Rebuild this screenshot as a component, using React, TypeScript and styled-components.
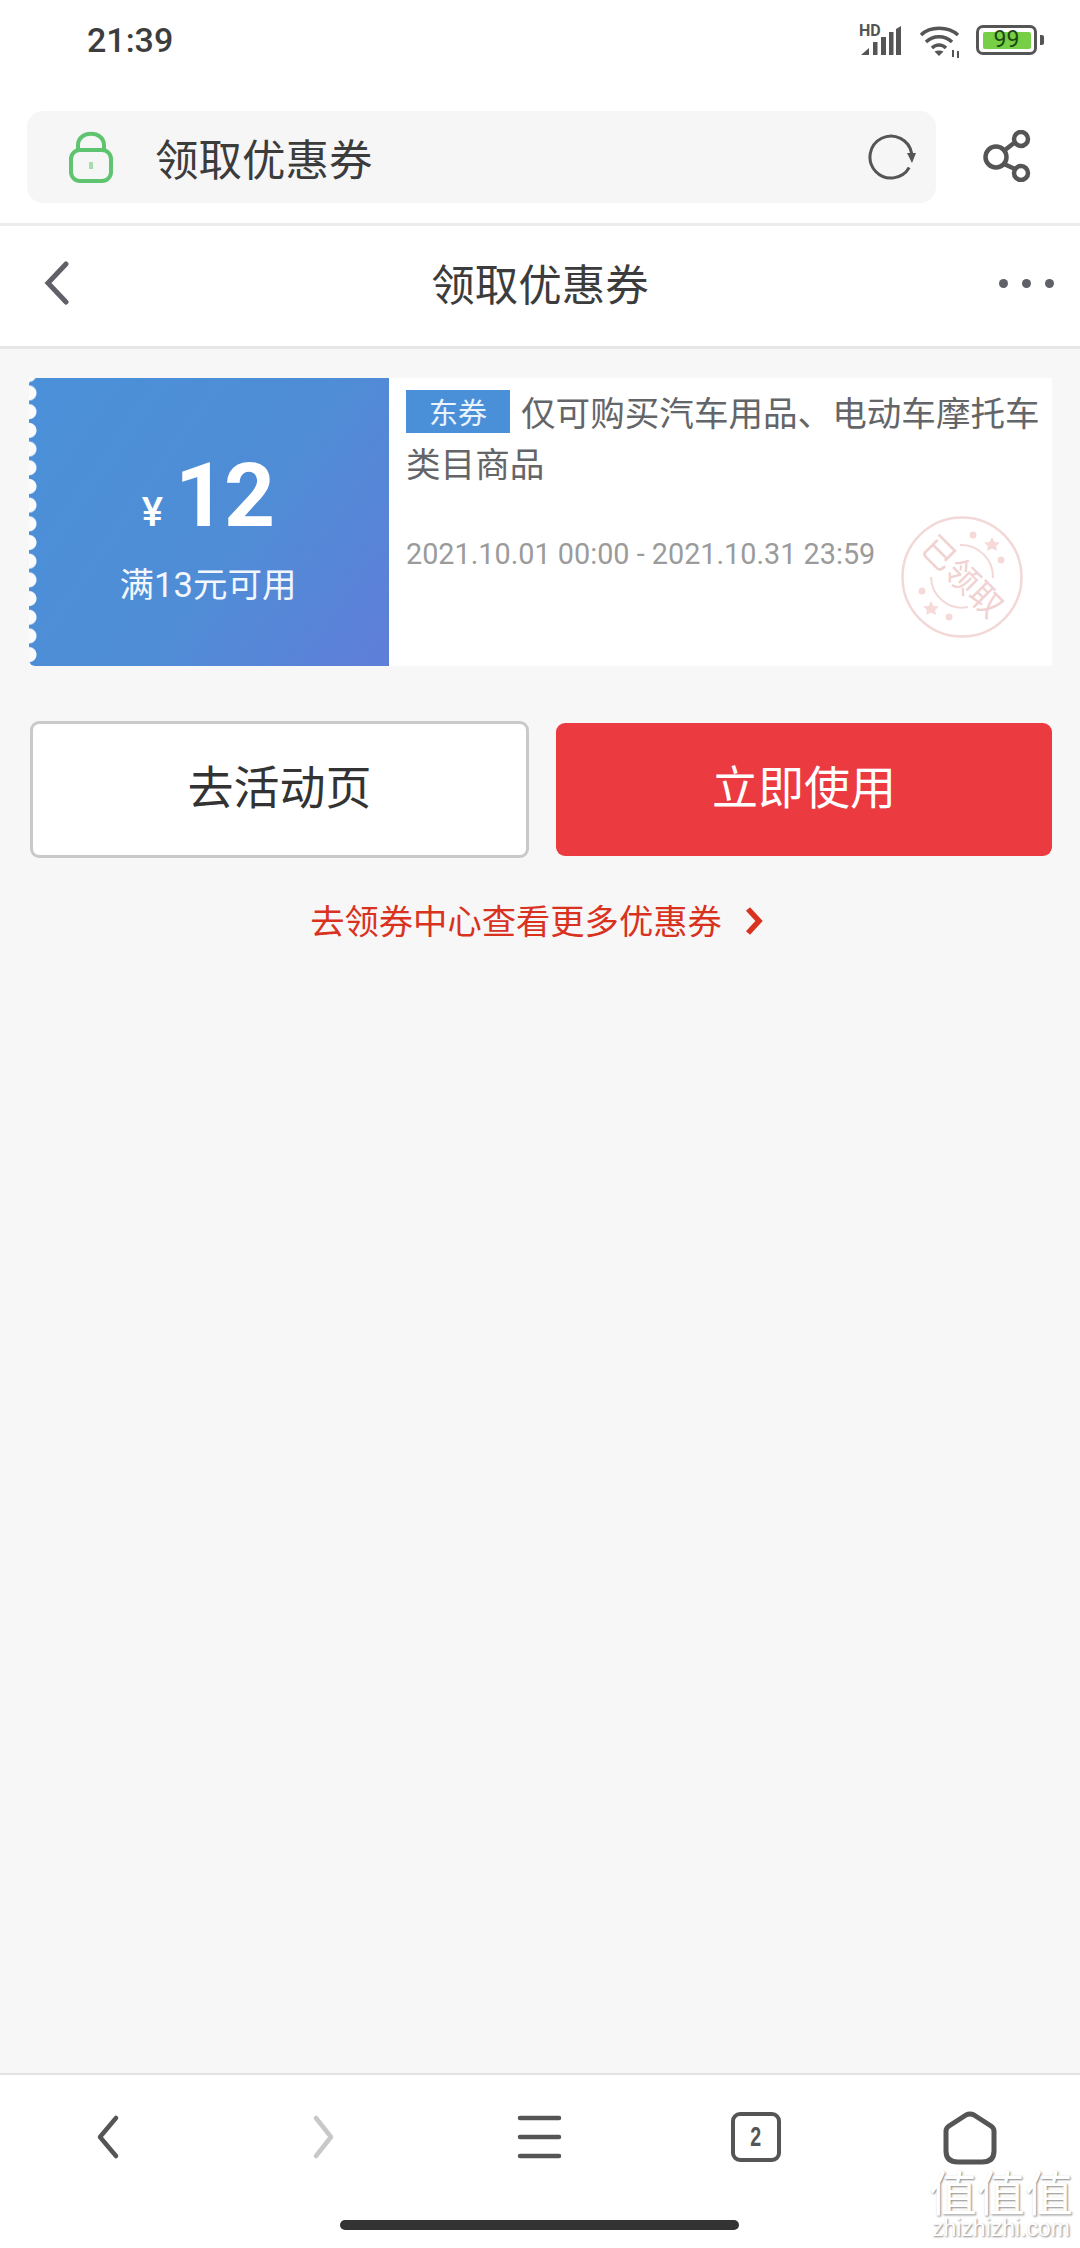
import React from "react";
import styled, { createGlobalStyle } from "styled-components";

const GlobalStyle = createGlobalStyle`
  html, body {
    margin: 0;
    padding: 0;
    background: #f7f7f7;
  }
  * {
    box-sizing: border-box;
  }
`;

const cjk = `"Noto Sans CJK SC", "Noto Sans", sans-serif`;
const latin = `Roboto, "Noto Sans CJK SC", sans-serif`;

const App: React.FC = () => {
  return (
    <Page>
      <GlobalStyle />
      <StatusBar>
        <Clock>21:39</Clock>
        <StatusIcons>
          <SignalIcon />
          <WifiIcon />
          <Battery>
            <BatteryBody>
              <BatteryFill>99</BatteryFill>
            </BatteryBody>
            <BatteryNub />
          </Battery>
        </StatusIcons>
      </StatusBar>

      <AddressRow>
        <AddressBar>
          <LockIcon />
          <AddressText>领取优惠券</AddressText>
          <RefreshIcon />
        </AddressBar>
        <ShareIcon />
      </AddressRow>

      <Header>
        <BackIcon />
        <HeaderTitle>领取优惠券</HeaderTitle>
        <Dots>
          <span />
          <span />
          <span />
        </Dots>
      </Header>

      <Main>
        <Ticket>
          <TicketLeft>
            <Amount>
              <Currency>¥</Currency>
              <Value>12</Value>
            </Amount>
            <Condition>满13元可用</Condition>
          </TicketLeft>
          <TicketRight>
            <Description>
              <Tag>东券</Tag>仅可购买汽车用品、电动车摩托车类目商品
            </Description>
            <DateRange>2021.10.01 00:00 - 2021.10.31 23:59</DateRange>
            <Stamp />
          </TicketRight>
        </Ticket>

        <Actions>
          <ActionButton>去活动页</ActionButton>
          <ActionButton $primary>立即使用</ActionButton>
        </Actions>

        <MoreLink>
          去领券中心查看更多优惠券
          <MoreChevron />
        </MoreLink>
      </Main>

      <BottomBar>
        <NavRow>
          <NavChevron d="M116 2118 L100 2137 L116 2156" color="#555" />
          <NavChevron d="M316 2118 L331 2137 L316 2156" color="#c8c8c8" />
          <MenuIcon />
          <TabCount>
            <TabDigit>2</TabDigit>
          </TabCount>
          <HomeIcon />
        </NavRow>
        <HomeIndicator />
        <Watermark>
          <WatermarkMark>值值值</WatermarkMark>
          <WatermarkSite>zhizhizhi.com</WatermarkSite>
        </Watermark>
      </BottomBar>
    </Page>
  );
};

const SignalIcon = () => (
  <SignalSvg width="44" height="38" viewBox="0 -6 44 38">
    <text x="0" y="12" fontFamily="Roboto, sans-serif" fontWeight="700" fontSize="16" fill="#555">
      HD
    </text>
    <path d="M2 31 L10 24 V31 Z" fill="#555" />
    <rect x="14" y="18" width="4.500" height="13" fill="#555" />
    <rect x="22" y="13" width="5" height="18" fill="#555" />
    <rect x="30" y="8" width="4.500" height="23" fill="#555" />
    <path d="M37 5 L42 2 V31 H37 Z" fill="#555" />
  </SignalSvg>
);

const WifiIcon = () => (
  <WifiSvg width="43" height="36" viewBox="0 0 43 36" fill="none" stroke="#555" strokeWidth="3.500">
    <path d="M3 11 C12 2 30 2 40 11" />
    <path d="M8 18 C15 11 27 11 34 18" />
    <path d="M14 24 C18 20 24 20 28 24" />
    <path d="M21 32 L16.500 27.500 C19 26 23 26 25.500 27.500 Z" fill="#555" stroke="none" />
    <path d="M35 26 V33 M40 34 V27" strokeWidth="2" />
  </WifiSvg>
);

const LockIcon = () => (
  <LockSvg width="44" height="52" viewBox="0 0 44 52" fill="none" stroke="#5fc46f" strokeWidth="4">
    <path d="M9 20 V14 C9 -1 35 -1 35 14 V20" />
    <rect x="2" y="19" width="40" height="31" rx="9" />
    <path d="M22 31 V38" stroke="#a6dcae" />
  </LockSvg>
);

const RefreshIcon = () => (
  <RefreshSvg width="50" height="46" viewBox="0 0 50 46" fill="none" stroke="#555" strokeWidth="3">
    <path d="M43.200 33.500 A21 21 0 1 1 45.700 19.500" />
    <path d="M41 19 L50 19 L46 29 Z" fill="#555" stroke="none" />
  </RefreshSvg>
);

const ShareIcon = () => (
  <ShareSvg width="48" height="52" viewBox="0 0 48 52" fill="none" stroke="#555" strokeWidth="4.500">
    <circle cx="13" cy="27" r="10.500" />
    <circle cx="38" cy="9" r="7" />
    <circle cx="38" cy="43" r="7" />
    <path d="M22 20 L31 13 M21 34 L32 39" />
  </ShareSvg>
);

const BackIcon = () => (
  <BackSvg width="26" height="44" viewBox="0 0 26 44" fill="none" stroke="#5f6068" strokeWidth="5" strokeLinecap="round">
    <path d="M22 3 L4 22 L22 41" />
  </BackSvg>
);

const MoreChevron = () => (
  <MoreSvg width="20" height="30" viewBox="0 0 20 30" fill="none" stroke="#d9321e" strokeWidth="5.500">
    <path d="M4 3 L15 15 L4 27" />
  </MoreSvg>
);

const Stamp = () => (
  <StampSvg width="124" height="124" viewBox="0 0 124 124" fill="none" stroke="#f3d8d8">
    <circle cx="62" cy="62" r="59.500" strokeWidth="2.500" />
    <path d="M60 30 A32 32 0 0 1 93 63" strokeWidth="2" />
    <path d="M31 62 A31 31 0 0 0 68 92" strokeWidth="2" />
    <StampText x="62" y="73" transform="rotate(45 62 62)">
      已领取
    </StampText>
    <g fill="#f6dada" stroke="none">
      <circle cx="73" cy="20" r="3.500" />
      <circle cx="101" cy="45" r="3.500" />
      <path d="M92 22 L94.500 27 L100 27.500 L96 31 L97 36 L92 33.500 L87 36 L88 31 L84 27.500 L89.500 27 Z" />
      <circle cx="22" cy="76" r="3.500" />
      <circle cx="49" cy="102" r="3.500" />
      <path d="M31 86 L33.500 91 L39 91.500 L35 95 L36 100 L31 97.500 L26 100 L27 95 L23 91.500 L28.500 91 Z" />
    </g>
  </StampSvg>
);

const NavChevron: React.FC<{ d: string; color: string }> = ({ d, color }) => (
  <NavSvg viewBox="0 0 1080 2248" fill="none" stroke={color} strokeWidth="4.500" strokeLinecap="round" strokeLinejoin="round">
    <path d={d} />
  </NavSvg>
);

const MenuIcon = () => (
  <NavSvg viewBox="0 0 1080 2248" fill="none" stroke="#555" strokeWidth="4.500" strokeLinecap="round">
    <path d="M520 2118 H559 M520 2137 H559 M520 2156 H559" />
  </NavSvg>
);

const HomeIcon = () => (
  <NavSvg viewBox="0 0 1080 2248" fill="none" stroke="#555" strokeWidth="5" strokeLinejoin="round">
    <path d="M946 2131 Q946 2128 949 2126 L966 2115 Q970 2113 974 2115 L991 2126 Q994 2128 994 2131 V2151 Q994 2162 982 2162 H958 Q946 2162 946 2151 Z" />
  </NavSvg>
);

const Page = styled.div`
  width: 1080px;
  height: 2248px;
  display: flex;
  flex-direction: column;
  background: #f7f7f7;
  overflow: hidden;
  font-family: ${cjk};
`;

const StatusBar = styled.div`
  height: 80px;
  padding: 0 36px 0 87px;
  display: flex;
  align-items: center;
  justify-content: space-between;
  background: #fff;
`;

const Clock = styled.div`
  font-family: ${latin};
  font-weight: 500;
  font-size: 34px;
  color: #3d3d3d;
`;

const StatusIcons = styled.div`
  display: flex;
  align-items: center;
  gap: 15px;
`;

const SignalSvg = styled.svg`
  margin-bottom: 6px;
`;

const WifiSvg = styled.svg`
  margin-top: 4px;
`;

const Battery = styled.div`
  display: flex;
  align-items: center;
  gap: 3px;
`;

const BatteryBody = styled.div`
  width: 61px;
  height: 30px;
  padding: 3.500px;
  border: 3.500px solid #555;
  border-radius: 7px;
`;

const BatteryFill = styled.div`
  height: 100%;
  background: #77cf45;
  border-radius: 2px;
  color: #1b4a12;
  font-family: ${latin};
  font-size: 23px;
  line-height: 16px;
  text-align: center;
`;

const BatteryNub = styled.div`
  width: 4px;
  height: 10px;
  background: #555;
  border-radius: 0 2px 2px 0;
`;

const AddressRow = styled.div`
  height: 146px;
  padding: 31px 0 20px 27px;
  display: flex;
  background: #fff;
  border-bottom: 3px solid #ececec;
`;

const AddressBar = styled.div`
  width: 909px;
  height: 92px;
  padding: 0 14px 0 42px;
  display: flex;
  align-items: center;
  background: #f6f6f6;
  border-radius: 16px;
`;

const LockSvg = styled.svg`
  flex-shrink: 0;
`;

const AddressText = styled.div`
  margin-left: 42px;
  flex: 1;
  font-size: 43.500px;
  color: #3c3c3c;
`;

const RefreshSvg = styled.svg`
  margin-right: 6px;
`;

const ShareSvg = styled.svg`
  margin: 19px 0 0 47px;
`;

const Header = styled.div`
  position: relative;
  height: 123px;
  padding: 0 26px 6px 44px;
  display: flex;
  align-items: center;
  justify-content: space-between;
  background: #fff;
  border-bottom: 3px solid #e6e6e6;
`;

const BackSvg = styled.svg`
  flex-shrink: 0;
`;

const HeaderTitle = styled.div`
  margin-left: 11px;
  padding-bottom: 2px;
  font-size: 43.500px;
  color: #3c3c3c;
`;

const Dots = styled.div`
  display: flex;
  gap: 14px;

  span {
    width: 9px;
    height: 9px;
    border-radius: 50%;
    background: #5f6068;
  }
`;

const Main = styled.div`
  flex: 1;
  padding: 29px 28px 0 30px;
`;

const Ticket = styled.div`
  height: 288px;
  margin-left: -1px;
  display: flex;
  background: #fff;
`;

const TicketLeft = styled.div`
  position: relative;
  width: 360px;
  display: flex;
  flex-direction: column;
  align-items: center;
  background: linear-gradient(125deg, #4a90d8 0%, #4f8dd6 55%, #5f7ed9 100%);
  border-radius: 6px 0 0 6px;

  &::before {
    content: "";
    position: absolute;
    left: 0;
    top: 0;
    bottom: 0;
    width: 8px;
    background: radial-gradient(circle at 0 50%, #fbfbfb 7px, transparent 8px) 0 5.650px / 100% 18.700px repeat-y;
  }
`;

const Amount = styled.div`
  margin-top: 73px;
  margin-left: -3px;
  height: 90px;
  display: flex;
  align-items: baseline;
  color: #fff;
  font-family: ${latin};
`;

const Currency = styled.span`
  font-size: 40px;
  font-weight: 500;
  margin-right: 12px;
`;

const Value = styled.span`
  font-size: 89px;
  line-height: 90px;
  font-weight: 700;
  letter-spacing: -2px;
`;

const Condition = styled.div`
  margin-top: 19px;
  margin-left: -2px;
  color: #f2f6fd;
  font-family: ${latin};
  font-size: 34.500px;
  line-height: 50px;
`;

const TicketRight = styled.div`
  position: relative;
  flex: 1;
  padding: 8px 10px 0 17px;
`;

const Description = styled.div`
  font-size: 34.600px;
  line-height: 51px;
  color: #646568;
`;

const Tag = styled.span`
  display: inline-block;
  width: 104px;
  height: 43px;
  margin-right: 11px;
  background: #4a90d8;
  color: #eaf3fc;
  font-size: 29px;
  line-height: 43px;
  text-align: center;
  vertical-align: 2px;
`;

const DateRange = styled.div`
  margin-top: 41px;
  font-family: ${latin};
  font-size: 28.800px;
  line-height: 50px;
  color: #9b9b9b;
`;

const StampSvg = styled.svg`
  position: absolute;
  left: 511px;
  top: 137px;
`;

const StampText = styled.text`
  font-family: ${cjk};
  font-size: 33px;
  fill: #f1d2d2;
  stroke: none;
  text-anchor: middle;
`;

const Actions = styled.div`
  margin-top: 55px;
  display: flex;
  align-items: center;
  gap: 27px;
`;

const ActionButton = styled.div<{ $primary?: boolean }>`
  width: ${(props) => (props.$primary ? "496px" : "499px")};
  height: ${(props) => (props.$primary ? "133px" : "137px")};
  padding-bottom: 12px;
  display: flex;
  align-items: center;
  justify-content: center;
  border-radius: 9px;
  font-size: 46px;
  background: ${(props) => (props.$primary ? "#ec3a41" : "#fff")};
  color: ${(props) => (props.$primary ? "#fff" : "#333")};
  border: ${(props) => (props.$primary ? "none" : "3px solid #c9c9c9")};
`;

const MoreLink = styled.div`
  margin-top: 36px;
  display: flex;
  align-items: center;
  justify-content: center;
  padding-right: 8px;
  font-size: 34.300px;
  line-height: 50px;
  color: #d9321e;
`;

const MoreSvg = styled.svg`
  margin-left: 22px;
  margin-top: 4px;
`;

const BottomBar = styled.div`
  position: relative;
  height: 175px;
  background: #fff;
  border-top: 2px solid #e2e2e2;
`;

const NavRow = styled.div`
  position: absolute;
  inset: 0;
`;

const NavSvg = styled.svg`
  position: absolute;
  left: 0;
  top: -2075px;
  width: 1080px;
  height: 2248px;
`;

const TabCount = styled.div`
  position: absolute;
  left: 731px;
  top: 37px;
  width: 50px;
  height: 50px;
  display: flex;
  align-items: center;
  justify-content: center;
  border: 4.500px solid #555;
  border-radius: 9px;
  color: #555;
  font-family: "Liberation Sans", sans-serif;
  font-weight: 700;
  font-size: 28px;
`;

const TabDigit = styled.span`
  display: inline-block;
  transform: scaleX(0.7);
`;

const HomeIndicator = styled.div`
  position: absolute;
  left: 340px;
  top: 145px;
  width: 399px;
  height: 10px;
  border-radius: 5px;
  background: #333;
`;

const Watermark = styled.div`
  position: absolute;
  left: 928px;
  top: 90px;
  width: 146px;
  display: flex;
  flex-direction: column;
  align-items: center;
  color: #fff;
  text-shadow: 1px 1px 2px #888;
`;

const WatermarkMark = styled.div`
  font-size: 48px;
  line-height: 50px;
  white-space: nowrap;
`;

const WatermarkSite = styled.div`
  font-family: "Liberation Sans", sans-serif;
  font-size: 23px;
  line-height: 26px;
`;

export default App;
